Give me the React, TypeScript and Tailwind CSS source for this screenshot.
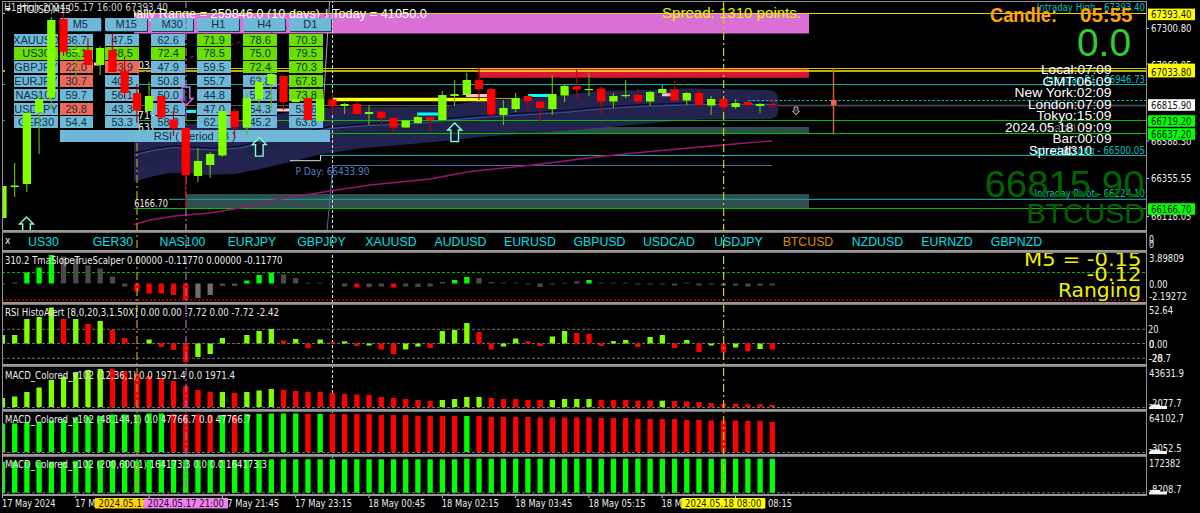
import type { ReactNode } from "react";

const STEP = 12.22;
const FIRST_X = 2.4;
const PLOT_LEFT = 3;
const PLOT_WIDTH = 1143;

const SANS = "'Liberation Sans', Arial, sans-serif";
const TAHOMA = "'DejaVu Sans Condensed', 'DejaVu Sans', sans-serif";
const VERDANA = "'DejaVu Sans', Verdana, sans-serif";

type Candle = [high: number, low: number, top: number, bottom: number, up: 0 | 1];

const candles: Candle[] = [
  [174, 226, 186, 218, 1], [163, 197, 185.5, 187, 1], [112, 192, 113, 184, 1], [94, 154, 99, 112.6, 1],
  [17, 108, 20, 97.6, 1], [13, 56, 19, 52, 0], [42, 77, 50, 52, 1], [38, 65, 50, 65, 0],
  [46, 75, 48, 65, 1], [33, 72, 50, 72, 0], [57, 98, 71, 93, 0], [84, 123, 93, 110.6, 0],
  [82, 111, 96, 111, 1], [96, 118, 96, 117.5, 0], [111, 136, 119.5, 128, 0], [128, 208, 128, 175, 0],
  [148, 182, 161, 176, 1], [152, 178, 154, 165, 1], [111, 157, 111, 155.5, 1], [109, 138, 111, 127, 0],
  [93, 135, 98, 127, 1], [76, 109, 82, 99, 1], [65, 109, 74, 84, 1], [76, 110, 76, 102, 0],
  [99, 102, 99, 102, 1], [98, 120, 98, 120, 0], [99, 121, 99, 121, 1], [94, 114, 99.5, 106, 0],
  [103, 114, 104, 106, 1], [102, 114, 104, 114, 0], [105, 125, 112, 114, 1], [111, 123, 111.5, 118, 0],
  [118, 133, 118, 127.5, 0], [120, 128, 120.5, 127.5, 1], [113, 124, 117, 123, 1], [116, 132, 117, 120, 0],
  [91, 120, 95, 120, 1], [80, 106, 94, 96, 1], [73, 95, 80, 95, 1], [68, 100, 80, 89, 0],
  [88, 117, 89, 114.5, 0], [100, 125, 108, 115, 1], [93, 112, 98, 109, 1], [95, 110, 96, 101, 0],
  [101, 121, 101.5, 108, 0], [75, 115, 94, 109, 1], [85, 102, 86, 95.5, 1], [70, 98, 86, 89.5, 0],
  [73, 96, 89, 90, 1], [86, 114, 88.5, 101.5, 0], [93, 108, 96, 101.5, 1], [80, 98, 95, 96, 1],
  [89, 104, 95, 101.5, 0], [91, 106, 92, 101.5, 1], [85, 93, 89, 93, 1], [81, 101, 89.5, 100.5, 0],
  [92, 105, 93, 100.5, 1], [90, 105, 93, 105, 0], [96, 115, 99, 105.5, 1], [99, 112, 99, 107, 0],
  [99, 109, 103, 107, 1], [101, 109, 102, 105, 0], [103, 113, 104, 106, 1], [98, 108, 104, 105, 0],
];

// Each histogram keeps the bar height in pixels and a colour letter per bar
const tmaValues = [
  -1, 1.2, 11, 16, 28.5, 27, 25, 18, 15, 7, -3, -8, -10, -10, -11.5, -16.5, -14.5, -11.5, -2.5, -2.5, 3, 8.5,
  11, 9, 5.5, 0.8, 0.8, -1, -3, -4, -3.7, -3, -4, -3, -3.5, -3, 1.5, 3.5, 6.5, 5.5, 1.3, 0.8, 0.8, -1, -3.5, -1,
  0.8, 2.2, 3.5, 0.8, 0.8, 0.8, -1, -1, -1, -2, 0.8, -2, -1, -2.5, -2, -3, -2, -2,
];
const tmaColors = "ddgggddddddrrrrrllddgggddddddrddrddddggdddddddddgddddddddddddddd";

const rsiValues = [
  8.5, 8.5, 24.5, 26.5, 36, 24.5, 24.5, 19.5, 22.5, 13.5, 5.5, -0.5, 4, -3.5, -6.5, -18.5, -13.5, -10.5, 5.5,
  -0.5, 8.5, 12.5, 14.5, 3, 4.5, -4.5, 4, 1.5, 2.2, -2.5, -2, -6, -10.5, -6, -3, -4.5, 12.5, 13.5, 20.5, 11.5,
  -6, -3, 5, 2.3, -2.5, 7, 12.5, 10.5, 9.5, -2.5, 2.3, 3.5, -3.5, 6.5, 8.5, -4.5, 3.5, -8.5, -2, -8.8, -4,
  -7.5, -5.5, -6,
];
const rsiColors = "cccccrcrcrrrcrrrcccrcccrcrcrcrcrrccrcccrrccrrccrrrccrccrcrcrcrcr";

const fastValues = [
  9, 10.5, 15, 19.5, 27, 30.5, 35, 37, 38, 38, 36, 33, 31, 29, 26, 21, 17, 15, 15, 14, 15, 16.5, 18, 17, 16, 15,
  15, 14, 13, 12.5, 12, 10, 9, 8, 7, 6, 7, 8, 10, 10, 9, 8, 8, 7, 7, 7, 8, 8, 8, 7, 7, 7, 6.3, 6.3, 6.3, 6, 5.7,
  5, 4, 3.3, 3.3, 2.7, 2.7, 2,
];
const fastColors = "cccccccccrrrrrrrrrcrcccrrrrrrrrrrrrrccccrrrrrccccrrrrrcrrrrrrrrr";

const mediumValues = [
  28.5, 28.5, 30, 30, 31.5, 32.5, 34.5, 35.5, 36, 37.5, 37.5, 37.5, 38.5, 38.5, 38, 38, 37.5, 37, 37, 36.5, 38,
  38, 38.5, 38.5, 38.5, 38, 38, 38, 37.8, 37.8, 37.8, 37, 37, 37, 36, 36, 36, 36, 36, 36, 35, 35, 35, 35, 34.5,
  34.5, 34.5, 34.5, 34.5, 34, 34, 34, 33, 33, 33, 33, 32, 32, 31.5, 31.5, 31.5, 31, 31, 30,
];
const mediumColors = "ggggggggggggggrrrrgrgggggrgrrrrrrrrrrrgrrrrrrrrrrrrrrrrrrrrrrrrr";

const slowValues = Array.from({ length: 64 }, (_, i) => (i < 6 ? 31 : i < 12 ? 32 : i < 22 ? 32.7 : i < 38 ? 33.4 : 34));
const slowColors = "g".repeat(64);

const palette: Record<string, string> = {
  c: "#80ff00",
  g: "#00ff00",
  r: "#ff0000",
  d: "#4a4a4a",
  l: "#6e6e6e",
};

const symbols = [
  "US30", "GER30", "NAS100", "EURJPY", "GBPJPY", "XAUUSD", "AUDUSD", "EURUSD",
  "GBPUSD", "USDCAD", "USDJPY", "BTCUSD", "NZDUSD", "EURNZD", "GBPNZD",
];

const timeframes = ["M5", "M15", "M30", "H1", "H4", "D1"];

const rsiTable: { symbol: string; values: string[]; tones: string }[] = [
  { symbol: "XAUUSD", values: ["36.7", "47.5", "62.6", "71.9", "78.6", "70.9"], tones: "bbbggg" },
  { symbol: "US30", values: ["65.1", "68.5", "72.4", "78.5", "75.0", "79.5"], tones: "gggggg" },
  { symbol: "GBPJPY", values: ["22.0", "23.9", "47.9", "59.5", "72.4", "70.3"], tones: "rrbbgg" },
  { symbol: "EURJPY", values: ["30.7", "40.3", "50.8", "55.7", "63.8", "67.8"], tones: "rbbbbg" },
  { symbol: "NAS100", values: ["59.7", "56.1", "50.0", "44.8", "55.2", "73.8"], tones: "bbbbbg" },
  { symbol: "USDJPY", values: ["29.8", "43.3", "55.6", "47.0", "54.3", "53.6"], tones: "rbbbbb" },
  { symbol: "GER30", values: ["54.4", "53.3", "58.3", "62.7", "45.2", "63.8"], tones: "bbbbbb" },
];

const toneClass: Record<string, string> = {
  b: "bg-[#70b8d8]",
  g: "bg-[#6be000]",
  r: "bg-[#ee6a5c]",
};

const clocks: [string, number, number][] = [
  ["Local:07:09", 74, 70.5],
  ["GMT:06:09", 85.7, 69],
  ["New York:02:09", 97, 97],
  ["London:07:09", 108.7, 83.5],
  ["Tokyo:15:09", 120.2, 75],
  ["2024.05.18 09:09", 131.8, 106.5],
  ["Bar:00:09", 143.3, 59],
];

interface ChartTextProps {
  x: number;
  y: number;
  w?: number;
  size?: number;
  fill?: string;
  font?: string;
  bold?: boolean;
  end?: boolean;
  children: ReactNode;
}

function ChartText({ x, y, w, size = 10.3, fill = "#ececec", font = TAHOMA, bold, end, children }: ChartTextProps) {
  return (
    <text
      x={x}
      y={y}
      fill={fill}
      fontSize={size}
      fontFamily={font}
      fontWeight={bold ? 700 : 400}
      textAnchor={end ? "end" : "start"}
      textLength={w}
      lengthAdjust="spacingAndGlyphs"
    >
      {children}
    </text>
  );
}

function Histogram({ values, colors, base }: { values: number[]; colors: string; base: number }) {
  return (
    <g>
      {values.map((v, i) => (
        <rect
          key={i}
          x={FIRST_X + i * STEP - 2.6}
          y={v > 0 ? base - v : base}
          width={5.3}
          height={Math.abs(v)}
          fill={palette[colors[i]]}
        />
      ))}
    </g>
  );
}

function Level({ y, color = "#8a8a8a", dash = "3 2", width = 1 }: { y: number; color?: string; dash?: string; width?: number }) {
  return <line x1={2} x2={1147} y1={y} y2={y} stroke={color} strokeDasharray={dash} strokeWidth={width} />;
}

function SessionGuides({ goldFrom = 0 }: { goldFrom?: number }) {
  return (
    <g strokeWidth={1.3}>
      <line x1={137} x2={137} y1={goldFrom} y2={496} stroke="#b8960a" strokeDasharray="8 3 2 3" />
      <line x1={186} x2={186} y1={0} y2={496} stroke="#a860a8" strokeDasharray="8 3 2 3" />
      <line x1={723.6} x2={723.6} y1={0} y2={496} stroke="#c8c800" strokeDasharray="8 3 2 3" />
    </g>
  );
}

function DayGuide() {
  return <line x1={332.5} x2={332.5} y1={0} y2={496} stroke="#d8d8d8" strokeDasharray="3 2" />;
}

interface PanelProps {
  top: number;
  height: number;
  axis?: ReactNode;
  children: ReactNode;
}

// Framed plot on the left, price scale on the right. Both use page coordinates.
function Panel({ top, height, axis, children }: PanelProps) {
  return (
    <div className="flex shrink-0 pl-0.5">
      <div className="relative box-border w-[1145px] overflow-hidden border border-b-2 border-x-[#949494] border-t-[#787878] border-b-[#989898]">
        <svg
          className="block"
          width={PLOT_WIDTH}
          height={height - 3}
          viewBox={`${PLOT_LEFT} ${top + 1} ${PLOT_WIDTH} ${height - 3}`}
        >
          {children}
        </svg>
      </div>
      <svg className="block" width={53} height={height} viewBox={`1147 ${top} 53 ${height}`}>
        {axis}
      </svg>
    </div>
  );
}

function PriceTag({ y, color, children }: { y: number; color: string; children: string }) {
  return (
    <g>
      <rect x={1148} y={y - 5.8} width={47} height={11.6} fill={color} />
      <ChartText x={1151} y={y + 3.9} w={40.5} fill="#101010">{children}</ChartText>
    </g>
  );
}

function MainAxis() {
  return (
    <>
      {[28.5, 64, 141, 178.5, 216.5].map((y) => (
        <line key={y} x1={1147} x2={1149} y1={y} y2={y} stroke="#c0c0c0" />
      ))}
      <ChartText x={1151} y={32.3} w={40.5}>67300.80</ChartText>
      <ChartText x={1151} y={69} w={40.5}>67068.05</ChartText>
      <ChartText x={1151} y={144.9} w={40.5}>66588.30</ChartText>
      <ChartText x={1151} y={182.3} w={40.5}>66355.55</ChartText>
      <ChartText x={1151} y={220.2} w={40.5}>66118.05</ChartText>
      <PriceTag y={14.4} color="#ffff00">67393.40</PriceTag>
      <rect x={1148} y={63.6} width={47} height={6} fill="#ffff00" />
      <PriceTag y={71.6} color="#ffff00">67033.80</PriceTag>
      <PriceTag y={105} color="#ffffff">66815.90</PriceTag>
      <PriceTag y={121} color="#00ff00">66719.20</PriceTag>
      <PriceTag y={134} color="#00ff00">66637.20</PriceTag>
      <PriceTag y={209} color="#00ff00">66166.70</PriceTag>
    </>
  );
}

function Backdrop() {
  const mid =
    "M134 155 L155 150 L175 147.5 L190 149 L215 150 L240 148 L270 141 L300 134 L330 128.5 L370 125.5 L420 123.5 L450 120 L480 117.5 L530 114.5 L570 112 L600 109 L640 106.5 L700 104.5 L772 104.5";
  return (
    <>
      <rect x={134} y={13.5} width={675} height={20} fill="#da70d6" />
      <rect x={480} y={127} width={329} height={6.5} fill="#2f4f4f" />
      <rect x={186} y={194} width={623} height={14.5} fill="#2f4f4f" />
      <path
        d="M134 137 L190 124 L240 121 L290 112 L335 107 L440 106.5 L480 101 L520 98.5 L553 97 L575 93.5 L610 90.5 L650 90 L690 88.5 L768 90 Q778 90 778 99 L778 111 Q778 119 768 119 L700 119.5 L670 121.5 L610 127 L550 132 L480 137 L440 141.5 L400 145 L360 148.5 L320 154.5 L290 162 L260 169 L235 174 L205 175 L186 173 L170 173 L150 177 L134 182 Z"
        fill="#232350"
      />
      <path d="M134 156 L175 149 L215 151.5 L270 142 L330 130 L450 121.5 L600 110.5 L560 116 L450 127 L330 138 L215 158 L134 164 Z" fill="#212149" />
      <path d={mid} transform="translate(0 -1.8)" fill="none" stroke="#05050f" strokeWidth={0.9} />
      <path d={mid} fill="none" stroke="#3c4f9c" />

      <rect x={479.5} y={68} width={329.5} height={9.7} fill="#dc143c" />
      <DayGuide />
      <g strokeWidth={1}>
        <line x1={2} x2={1147} y1={13.5} y2={13.5} stroke="#e8d800" />
        <line x1={134} x2={1147} y1={68.5} y2={68.5} stroke="#d8c800" />
        <line x1={2} x2={1147} y1={71} y2={71} stroke="#f8f000" strokeWidth={1.6} />
        <line x1={2} x2={1147} y1={84.5} y2={84.5} stroke="#00b4b4" />
        <line x1={748} x2={1147} y1={100.5} y2={100.5} stroke="#00c0c0" strokeDasharray="2.5 2" />
        <line x1={134} x2={450} y1={105.5} y2={105.5} stroke="#585858" />
        <line x1={778} x2={1147} y1={105.5} y2={105.5} stroke="#4c5262" strokeWidth={1.5} />
        <line x1={2} x2={1147} y1={120.5} y2={120.5} stroke="#00c000" />
        <line x1={134} x2={1147} y1={133.5} y2={133.5} stroke="#00c000" />
        <line x1={320} x2={1147} y1={155.5} y2={155.5} stroke="#00b4bc" />
        <line x1={169} x2={1147} y1={199.4} y2={199.4} stroke="#149494" strokeWidth={1.2} />
        <line x1={134} x2={1147} y1={208.5} y2={208.5} stroke="#00c000" />
      </g>
      <path d="M290 160.7 H320.5 V155.5" fill="none" stroke="#e0e0e0" />
      <path d="M327 231 L333 165.5 H772" fill="none" stroke="#4a6cab" />
      <path d="M329.5 2 L323 110" fill="none" stroke="#a8a8a8" />
      <path d="M137 74 L330 14" fill="none" stroke="#d01030" strokeDasharray="3 4" />
      <path
        d="M134 224.5 L150 220 L175 216 L210 213 L240 208 L280 199 L333 190.5 L370 185 L400 182 L430 179 L470 171.5 L533 165 L600 156.5 L650 151.5 L700 147 L740 143.5 L772 141"
        fill="none"
        stroke="#a01470"
        strokeWidth={1.3}
      />
      <path d="M332 99.5 H487" stroke="#ffff00" strokeWidth={3.6} />
      <path d="M487 98.5 H516" stroke="#b0a020" />
      <path d="M417 114 H438 M528 95.5 H550 M186 111.5 H196" stroke="#00ffff" strokeWidth={3} />
      <path d="M466 95.5 H487 M277 110 H289 M662 94.7 H672" stroke="#ffc0cb" strokeWidth={3} />

      <ChartText x={127} y={17.6} w={193} size={12.5} fill="#ffffff" font={SANS}>Daily Range = 259846.0 (10 days)</ChartText>
      <ChartText x={325} y={17.6} size={12.5} fill="#ffffff" font={SANS}>|</ChartText>
      <ChartText x={332} y={17.6} w={95} size={12.5} fill="#ffffff" font={SANS}>Today = 41050.0</ChartText>
      <ChartText x={138} y={69}>03.</ChartText>
      <ChartText x={138} y={119}>719</ChartText>
      <ChartText x={138} y={131}>637</ChartText>
      <ChartText x={129} y={206.7} w={39}>66166.70</ChartText>
      <rect x={5} y={2} width={129} height={229} fill="#000000" />
      <path d="M94 64 H101" stroke="#ffc0cb" strokeWidth={3} />
      <ChartText x={4} y={11} w={164} fill="#d0d0d0">H1 High  2024.05.17 16:00   67393.40</ChartText>
      <ChartText x={295.5} y={175.3} w={74} fill="#5080c4">P Day: 66433.90</ChartText>
    </>
  );
}

function BlockArrow({ x, y, down, color }: { x: number; y: number; down?: boolean; color: string }) {
  return (
    <path
      d="M0 0 L7 7 L3.8 7 L3.8 18.5 L-3.8 18.5 L-3.8 7 L-7 7 Z"
      transform={down ? `translate(${x} ${y}) scale(1 -1)` : `translate(${x} ${y})`}
      fill="#000000"
      fillOpacity={0.35}
      stroke={color}
      strokeWidth={1.4}
    />
  );
}

function Candles() {
  return (
    <g>
      {candles.map(([high, low, top, bottom, up], i) => {
        const x = FIRST_X + i * STEP;
        return (
          <g key={i}>
            <line x1={x} x2={x} y1={high} y2={low} stroke={up ? "#5cb800" : "#c00000"} strokeWidth={1.2} />
            <rect x={x - 4.1} y={top} width={8.3} height={Math.max(bottom - top, 1.2)} fill={up ? "#80ff00" : "#ff0000"} />
          </g>
        );
      })}
    </g>
  );
}

function Annotations() {
  return (
    <>
      <path d="M5 8 H11 L8 11.2 Z" fill="#ffffff" />
      <ChartText x={16.5} y={13} w={54}>BTCUSD,M15</ChartText>

      <BlockArrow x={26.5} y={217} color="#7fffd4" />
      <BlockArrow x={259.3} y={137.6} color="#7fffd4" />
      <BlockArrow x={454.7} y={123} color="#7fffd4" />
      <BlockArrow x={186} y={105.5} down color="#d070f0" />
      <path d="M794 107 H798 V111 H799.5 L796 115 L792.5 111 H794 Z" fill="#203050" stroke="#e0a890" strokeWidth={0.9} />
      <line x1={833.5} x2={833.5} y1={68.5} y2={134.5} stroke="#d0603c" strokeWidth={1.5} />
      <rect x={831} y={100} width={5.5} height={5} fill="#ff6347" />

      <ChartText x={662} y={18} w={139} size={14.6} fill="#f0f000" font={SANS}>Spread: 1310 points.</ChartText>

      <ChartText x={1037} y={11.2} w={108} fill="#00c0c0">Intraday High  -  67393.40</ChartText>
      <ChartText x={1046} y={82.7} w={99} fill="#00c0c0">Intraday R1  -  66946.73</ChartText>
      <ChartText x={1034} y={153.7} w={111} fill="#00c0c0">Intraday Long  -  66500.05</ChartText>
      <ChartText x={1034.5} y={197.2} w={110.5} fill="#00c0c0">Intraday Pivot  -  66224.10</ChartText>

      <ChartText x={990} y={21.8} w={67} size={20} fill="#ffa500" font={SANS} bold>Candle:</ChartText>
      <ChartText x={1080} y={21.8} w={52.5} size={20} fill="#ffa500" font={SANS} bold>05:55</ChartText>
      <ChartText x={1077} y={56} w={54} size={38} fill="#32cd32" font={SANS}>0.0</ChartText>
      <ChartText x={1048} y={131.5} w={28} size={12} fill="#606060" font={SANS}>Label</ChartText>
      {clocks.map(([text, y, w]) => (
        <ChartText key={text} x={1111.5} y={y} w={w} size={13.3} fill="#ffffff" font={SANS} end>{text}</ChartText>
      ))}
      <ChartText x={1029} y={154.5} w={46} size={13.3} fill="#ffffff" font={SANS}>Spread:</ChartText>
      <ChartText x={1063} y={154.5} w={29} size={13.3} fill="#ffffff" font={SANS}>1310</ChartText>
      <ChartText x={984.5} y={196.5} w={160} size={37} fill="#006400" font={SANS}>66815.90</ChartText>
      <ChartText x={1026.5} y={222.5} w={118.5} size={28} fill="#006400" font={SANS}>BTCUSD</ChartText>
    </>
  );
}

function RsiTable() {
  return (
    <div className="absolute left-[11px] top-[16px] w-[320px] text-center font-['Liberation_Sans',Arial,sans-serif] text-[11px] leading-[12.5px] text-[#123044]">
      <div className="flex gap-[4.4px] pl-[45.5px]">
        {timeframes.map((tf) => (
          <div
            key={tf}
            className="h-[12.5px] w-[41.6px] shrink-0 rounded-[1px] bg-[#70b8d8] shadow-[1px_1px_0_#1c3a4c]"
          >
            {tf}
          </div>
        ))}
      </div>
      <div className="mt-[3.1px] flex flex-col gap-[1.6px]">
        {rsiTable.map((row) => (
          <div key={row.symbol} className="flex h-[12.2px]">
            <div
              className={`flex w-[44px] shrink-0 justify-center overflow-hidden ${row.symbol === "US30" ? "bg-[#6be000]" : "bg-[#70b8d8]"}`}
            >
              {row.symbol}
            </div>
            <div className="flex gap-[12.6px] pl-[1.5px]">
              {row.values.map((value, i) => (
                <div key={timeframes[i]} className={`w-[33.4px] shrink-0 ${toneClass[row.tones[i]]}`}>{value}</div>
              ))}
            </div>
          </div>
        ))}
      </div>
      <div className="ml-[45.5px] mt-[1.6px] h-[12px] w-[270.5px] bg-[#70b8d8]">RSI ( Period 13 )</div>
    </div>
  );
}

function MainPanel() {
  return (
    <div className="flex shrink-0 pl-0.5">
      <div className="relative box-border h-[231px] w-[1145px] overflow-hidden border border-b-2 border-x-[#949494] border-t-[#949494] border-b-[#989898]">
        <svg className="absolute inset-0" width={PLOT_WIDTH} height={228} viewBox="3 2 1143 228">
          <Backdrop />
        </svg>
        <RsiTable />
        <svg className="absolute inset-0" width={PLOT_WIDTH} height={228} viewBox="3 2 1143 228">
          <SessionGuides goldFrom={143} />
          <Candles />
          <Annotations />
        </svg>
      </div>
      <svg className="block" width={53} height={231} viewBox="1147 1 53 231">
        <MainAxis />
      </svg>
    </div>
  );
}

function SymbolBar() {
  return (
    <div className="flex shrink-0 pl-0.5">
      <div className="relative box-border h-5 w-[1145px] border border-b-2 border-x-[#949494] border-t-[#787878] border-b-[#989898]">
        <svg className="absolute inset-0" width={PLOT_WIDTH} height={17} viewBox="3 233 1143 17">
          <DayGuide />
          <SessionGuides />
          <ChartText x={5} y={244}>x</ChartText>
        </svg>
        <div className="relative flex pl-[5.7px] pt-px font-['Liberation_Sans',Arial,sans-serif] text-[12.3px] leading-4">
          {symbols.map((s) => (
            <button key={s} className={`w-[69.5px] shrink-0 text-center ${s === "BTCUSD" ? "text-[#e08c00]" : "text-[#00e0e8]"}`}>
              {s}
            </button>
          ))}
        </div>
      </div>
      <svg className="block" width={53} height={20} viewBox="1147 232 53 20">
        <ChartText x={1149} y={242.5} w={5}>0</ChartText>
        <ChartText x={1149} y={247.8} w={5}>0</ChartText>
      </svg>
    </div>
  );
}

const timeLabels: [string, number, number][] = [
  ["17 May 2024", 2, 53.5],
  ["17 May 18:45", 75, 57],
  ["17 May 21:45", 222, 57],
  ["17 May 23:15", 295, 57],
  ["18 May 00:45", 368.3, 57],
  ["18 May 02:15", 441.8, 57],
  ["18 May 03:45", 515.2, 57],
  ["18 May 05:15", 588.5, 57],
  ["18 May 06:45", 661.5, 57],
  ["18 May 08:15", 735, 57],
];

function TimeAxis() {
  return (
    <svg className="block" width={1200} height={17} viewBox="0 496 1200 17">
      {Array.from({ length: 11 }, (_, i) => (
        <line key={i} x1={2.5 + i * 73.3} x2={2.5 + i * 73.3} y1={496} y2={498} stroke="#c0c0c0" />
      ))}
      {timeLabels.map(([text, x, w]) => (
        <ChartText key={x} x={x} y={507} w={w}>{text}</ChartText>
      ))}
      <rect x={95} y={498} width={49} height={10.5} fill="#ffd700" />
      <ChartText x={98.5} y={507} w={76} fill="#201800">2024.05.17 18:00</ChartText>
      <rect x={143.7} y={498} width={84.3} height={10.5} fill="#ee82ee" />
      <ChartText x={147.5} y={507} w={76.5} fill="#201020">2024.05.17 21:00</ChartText>
      <rect x={681.3} y={498} width={84} height={10.5} fill="#ffff00" />
      <ChartText x={685} y={507} w={76.5} fill="#202000">2024.05.18 08:00</ChartText>
    </svg>
  );
}

// Level captions that pile up on the bottom edge of the MACD scales
function StackedLevels({ y }: { y: number }) {
  return <path d={`M1149 ${y + 2} V${y} L1152 ${y - 2.5} H1160 V${y - 1} H1167 V${y + 2} Z`} fill="#f4f4f4" />;
}

export default function App() {
  return (
    <div className="flex h-[513px] w-[1200px] flex-col overflow-hidden bg-black pt-px">
      <MainPanel />
      <SymbolBar />

      <Panel
        top={252}
        height={52}
        axis={
          <>
            <ChartText x={1149} y={262.3} w={35}>3.89809</ChartText>
            <ChartText x={1149} y={287.7} w={18.5}>0.00</ChartText>
            <ChartText x={1149} y={300} w={38}>-2.19272</ChartText>
          </>
        }
      >
        <DayGuide />
        <Level y={272.5} color="#00b400" />
        <Level y={300} color="#900000" dash="2 2" width={1.8} />
        <Histogram values={tmaValues} colors={tmaColors} base={283.5} />
        <SessionGuides />
        <ChartText x={5} y={264} w={277.5}>310.2  TmaSlopeTrueScalper 0.00000 -0.11770 0.00000 -0.11770</ChartText>
        <ChartText x={1024} y={266} w={117.5} size={20} fill="#f0f000" font={VERDANA}>M5 = -0.15</ChartText>
        <ChartText x={1086.5} y={281.3} w={55} size={20} fill="#f0f000" font={VERDANA}>-0.12</ChartText>
        <ChartText x={1058} y={296.5} w={83} size={20} fill="#f0f000" font={VERDANA}>Ranging</ChartText>
      </Panel>

      <Panel
        top={304}
        height={62}
        axis={
          <>
            <ChartText x={1149} y={314.3} w={24}>52.64</ChartText>
            <ChartText x={1148} y={333.2} w={10.5}>20</ChartText>
            <ChartText x={1149} y={347.5} w={18.5}>0.00</ChartText>
            <ChartText x={1149} y={347.5} w={5.3}>0</ChartText>
            <ChartText x={1149} y={362.2} w={22}>-28.7</ChartText>
            <ChartText x={1149} y={362.2} w={13.5}>-20</ChartText>
          </>
        }
      >
        <DayGuide />
        <Level y={329.3} color="#707070" />
        <Level y={343.5} color="#707070" />
        <Level y={358.3} color="#707070" />
        <Histogram values={rsiValues} colors={rsiColors} base={343.5} />
        <SessionGuides />
        <ChartText x={5} y={316} w={274}>RSI HistoAlert [8,0,20,3,1.50X] 0.00 0.00 -7.72 0.00 -7.72 -2.42</ChartText>
      </Panel>

      <Panel
        top={366}
        height={45}
        axis={
          <>
            <ChartText x={1149} y={377.3} w={35}>43631.9</ChartText>
            <ChartText x={1149} y={407.3} w={32.5}>-2077.7</ChartText>
            <StackedLevels y={407} />
          </>
        }
      >
        <DayGuide />
        <Level y={407.5} color="#707070" />
        <Histogram values={fastValues} colors={fastColors} base={407} />
        <SessionGuides />
        <ChartText x={5} y={378.6} w={230}>MACD_Colored_v102 (12,36,1) 0.0 1971.4 0.0 1971.4</ChartText>
      </Panel>

      <Panel
        top={411}
        height={45}
        axis={
          <>
            <ChartText x={1149} y={421.6} w={35}>64102.7</ChartText>
            <ChartText x={1149} y={452.3} w={32.5}>-3052.5</ChartText>
            <StackedLevels y={452} />
          </>
        }
      >
        <DayGuide />
        <Level y={452.5} color="#707070" />
        <Histogram values={mediumValues} colors={mediumColors} base={452} />
        <SessionGuides />
        <ChartText x={5} y={423} w={246}>MACD_Colored_v102 (48,144,1) 0.0 47766.7 0.0 47766.7</ChartText>
      </Panel>

      <Panel
        top={456}
        height={40}
        axis={
          <>
            <ChartText x={1149} y={466.8} w={31.5}>172382</ChartText>
            <ChartText x={1149} y={492.8} w={32.5}>-8208.7</ChartText>
            <StackedLevels y={492.5} />
          </>
        }
      >
        <DayGuide />
        <Level y={492.8} color="#707070" />
        <Histogram values={slowValues} colors={slowColors} base={492.7} />
        <SessionGuides />
        <ChartText x={5} y={468.3} w={262}>MACD_Colored_v102 (200,600,1) 164173.3 0.0 0.0 164173.3</ChartText>
      </Panel>

      <TimeAxis />
    </div>
  );
}
